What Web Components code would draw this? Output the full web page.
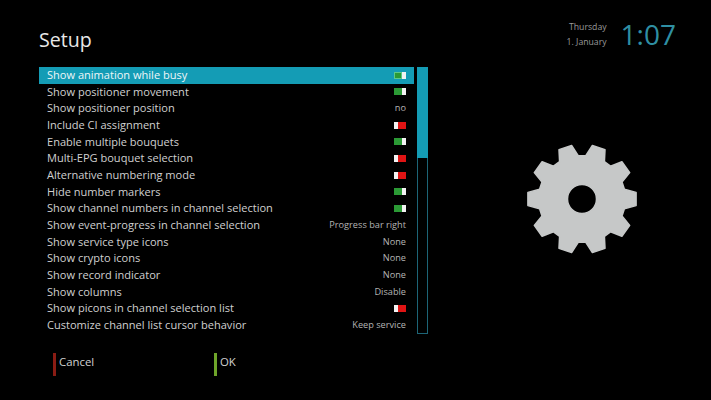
<!DOCTYPE html>
<html>
<head>
<meta charset="utf-8">
<title>Setup</title>
<style>
  html, body { margin: 0; padding: 0; background: #000; }
  body { width: 711px; height: 400px; overflow: hidden; font-family: "Open Sans", sans-serif; }
</style>
</head>
<body>
<setup-screen>
  <span slot="title">Setup</span>
  <clock-panel slot="clock" day="Thursday" date="1. January" time="1:07"></clock-panel>
  <setup-row selected toggle="on">Show animation while busy</setup-row>
  <setup-row toggle="on">Show positioner movement</setup-row>
  <setup-row value="no">Show positioner position</setup-row>
  <setup-row toggle="off">Include CI assignment</setup-row>
  <setup-row toggle="on">Enable multiple bouquets</setup-row>
  <setup-row toggle="off">Multi-EPG bouquet selection</setup-row>
  <setup-row toggle="off">Alternative numbering mode</setup-row>
  <setup-row toggle="on">Hide number markers</setup-row>
  <setup-row toggle="on">Show channel numbers in channel selection</setup-row>
  <setup-row value="Progress bar right">Show event-progress in channel selection</setup-row>
  <setup-row value="None">Show service type icons</setup-row>
  <setup-row value="None">Show crypto icons</setup-row>
  <setup-row value="None">Show record indicator</setup-row>
  <setup-row value="Disable">Show columns</setup-row>
  <setup-row toggle="off">Show picons in channel selection list</setup-row>
  <setup-row value="Keep service">Customize channel list cursor behavior</setup-row>
  <gear-icon slot="side"></gear-icon>
  <key-hint slot="keys" color="#8a1c14">Cancel</key-hint>
  <key-hint slot="keys" color="#6fa52a">OK</key-hint>
</setup-screen>

<script>
class SetupScreen extends HTMLElement {
  constructor() {
    super();
    this.attachShadow({ mode: 'open' });
    this.shadowRoot.innerHTML = `
      <style>
        :host {
          display: grid;
          grid-template-columns: 389px 1fr;
          grid-template-rows: 67px 267px 1fr;
          width: 711px;
          height: 400px;
          box-sizing: border-box;
          padding-left: 39px;
          color: #d6d6d6;
        }
        .title {
          font-size: 19.6px;
          line-height: 27px;
          color: #e8e8e8;
          padding-top: 26px;
        }
        .clock { display: flex; justify-content: flex-end; padding: 16px 35px 0 0; }
        .body { display: flex; gap: 3px; }
        .rows { width: 375px; flex: none; display: flex; flex-direction: column; }
        .track {
          box-sizing: border-box;
          width: 11px;
          flex: none;
          border: 1px solid #1d6577;
        }
        .thumb { height: 91px; margin: -1px; background: #149cb5; }
        .side { display: flex; justify-content: flex-end; padding: 76px 73px 0 0; }
        .keys { display: flex; padding: 19px 0 0 14px; }
      </style>
      <div class="title"><slot name="title"></slot></div>
      <div class="clock"><slot name="clock"></slot></div>
      <div class="body">
        <div class="rows"><slot></slot></div>
        <div class="track"><div class="thumb"></div></div>
      </div>
      <div class="side"><slot name="side"></slot></div>
      <div class="keys"><slot name="keys"></slot></div>
    `;
  }
}

class ClockPanel extends HTMLElement {
  constructor() {
    super();
    this.attachShadow({ mode: 'open' });
  }
  connectedCallback() {
    this.shadowRoot.innerHTML = `
      <style>
        :host { display: flex; gap: 14px; align-items: flex-start; }
        .date {
          font-size: 8.7px;
          line-height: 15px;
          text-align: right;
          color: #9a9a9a;
          padding-top: 4px;
        }
        .time {
          font-size: 28px;
          line-height: 36px;
          color: #2f8fa3;
        }
      </style>
      <div class="date">${this.getAttribute('day')}<br>${this.getAttribute('date')}</div>
      <div class="time">${this.getAttribute('time')}</div>
    `;
  }
}

class SetupRow extends HTMLElement {
  constructor() {
    super();
    this.attachShadow({ mode: 'open' });
  }
  connectedCallback() {
    const value = this.getAttribute('value');
    const toggle = this.getAttribute('toggle');
    let right = '';
    if (value) right = `<span class="value">${value}</span>`;
    if (toggle) right = `<span class="toggle ${toggle}"><i></i><i></i></span>`;
    this.shadowRoot.innerHTML = `
      <style>
        :host {
          display: flex;
          align-items: center;
          justify-content: space-between;
          box-sizing: border-box;
          height: 16.67px;
          padding: 0 8px 1.4px;
          font-size: 11.05px;
          line-height: 15px;
          color: #d0d0d0;
          white-space: nowrap;
        }
        :host([selected]) { background: #149cb5; color: #eef6f8; }
        .value { font-size: 9.2px; color: #b4b4b4; }
        .toggle { display: flex; width: 12px; height: 7px; margin-top: 1px; }
        .toggle i { display: block; height: 100%; }
        .on i:first-child { width: 8px; background: #2b9a35; }
        .on i:last-child { width: 4px; background: #f2f2f2; }
        .off i:first-child { width: 4px; background: #f2f2f2; }
        .off i:last-child { width: 8px; background: #e01414; }
        :host([selected]) .toggle i:first-child { box-shadow: inset 0 0 0 1px #5cc98a; }
      </style>
      <slot></slot>
      ${right}
    `;
  }
}

class GearIcon extends HTMLElement {
  constructor() {
    super();
    this.attachShadow({ mode: 'open' });
  }
  connectedCallback() {
    // 10 teeth, the top two sit 18deg either side of vertical
    const pts = [];
    const at = (deg, r) => {
      const a = (deg - 90) * Math.PI / 180;
      return (56 + r * Math.cos(a)).toFixed(1) + ' ' + (56 + r * Math.sin(a)).toFixed(1);
    };
    for (let i = 0; i < 10; i++) {
      const c = 18 + i * 36;
      pts.push(at(c - 13, 43.5), at(c - 7, 54.5), at(c + 7, 54.5), at(c + 13, 43.5));
    }
    const d = 'M' + pts.join('L') + 'Z M70.5 56a14.5 14.5 0 1 0 -29 0a14.5 14.5 0 1 0 29 0Z';
    this.shadowRoot.innerHTML = `
      <style>:host { display: block; width: 112px; height: 112px; } svg { display: block; }</style>
      <svg width="112" height="112" viewBox="0 0 112 112">
        <path d="${d}" fill="#c6c8c8" fill-rule="evenodd" stroke="#c6c8c8" stroke-width="1.5" stroke-linejoin="round"/>
      </svg>
    `;
  }
}

class KeyHint extends HTMLElement {
  constructor() {
    super();
    this.attachShadow({ mode: 'open' });
  }
  connectedCallback() {
    this.shadowRoot.innerHTML = `
      <style>
        :host {
          display: flex;
          align-items: center;
          gap: 3px;
          width: 161px;
          height: 23px;
          font-size: 11.4px;
          color: #d0d0d0;
        }
        .bar { width: 3px; height: 23px; background: ${this.getAttribute('color')}; }
        .label { padding-bottom: 6px; }
      </style>
      <div class="bar"></div><div class="label"><slot></slot></div>
    `;
  }
}

customElements.define('setup-screen', SetupScreen);
customElements.define('clock-panel', ClockPanel);
customElements.define('setup-row', SetupRow);
customElements.define('gear-icon', GearIcon);
customElements.define('key-hint', KeyHint);
</script>
</body>
</html>
